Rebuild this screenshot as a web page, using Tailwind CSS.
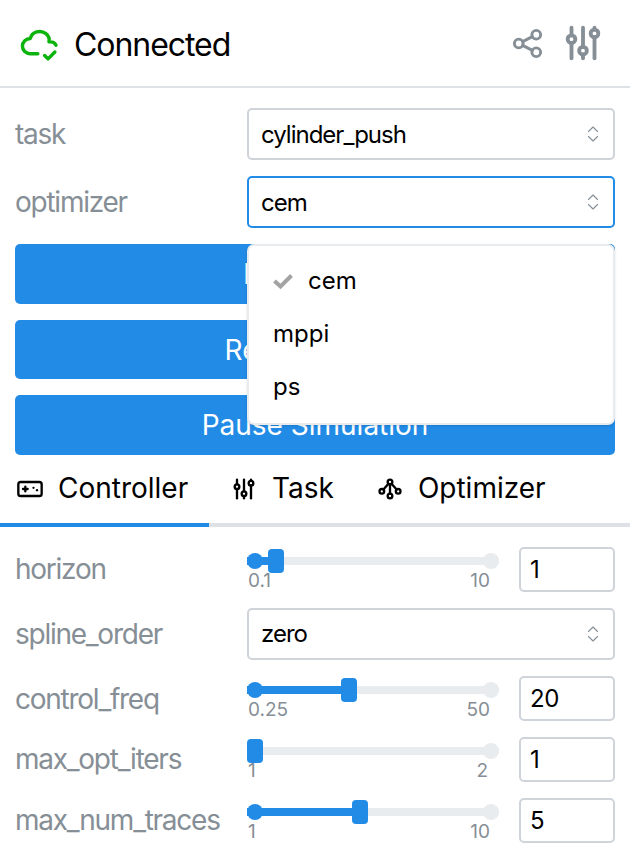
<!DOCTYPE html>
<html>
<head>
<meta charset="utf-8">
<script src="https://cdn.jsdelivr.net/npm/@tailwindcss/browser@4"></script>
</head>
<body class="bg-white font-[Inter,sans-serif] text-black overflow-hidden">
<div class="relative w-[630px] h-[850px] overflow-hidden">
  <header class="h-[88px] border-b-2 border-[#dee2e6] flex items-center pl-[19px] pr-[24px]">
    <svg class="w-[41px] h-[41px] text-[#0cb30c]" viewBox="0 0 24 24" fill="none" stroke="currentColor" stroke-width="2" stroke-linecap="round" stroke-linejoin="round"><path d="M11 18.004h-4.343c-2.572 -.004 -4.657 -2.011 -4.657 -4.487c0 -2.475 2.085 -4.482 4.657 -4.482c.393 -1.762 1.794 -3.2 3.675 -3.773c1.88 -.572 3.956 -.193 5.444 1c1.488 1.19 2.162 3.007 1.77 4.769h.99c1.388 0 2.585 .82 3.138 2.007"/><path d="M15 19l2 2l4 -4"/></svg>
    <span class="ml-[14px] mt-[3px] text-[32px] leading-none tracking-[-1.05px]">Connected</span>
    <div class="ml-auto flex items-center gap-[15px] text-[#868e96]">
      <svg class="w-[35px] h-[35px]" viewBox="0 0 24 24" fill="none" stroke="currentColor" stroke-width="2" stroke-linecap="round" stroke-linejoin="round"><path d="M3 12a3 3 0 1 0 6 0a3 3 0 0 0 -6 0"/><path d="M15 6a3 3 0 1 0 6 0a3 3 0 0 0 -6 0"/><path d="M15 18a3 3 0 1 0 6 0a3 3 0 0 0 -6 0"/><path d="M8.7 10.7l6.6 -3.4"/><path d="M8.7 13.3l6.6 3.4"/></svg>
      <svg class="w-[46px] h-[46px]" viewBox="0 0 24 24" fill="none" stroke="currentColor" stroke-width="2" stroke-linecap="round" stroke-linejoin="round"><path d="M4 10a2 2 0 1 0 4 0a2 2 0 0 0 -4 0"/><path d="M6 4v4"/><path d="M6 12v8"/><path d="M10 16a2 2 0 1 0 4 0a2 2 0 0 0 -4 0"/><path d="M12 4v10"/><path d="M12 18v2"/><path d="M16 7a2 2 0 1 0 4 0a2 2 0 0 0 -4 0"/><path d="M18 4v1"/><path d="M18 9v11"/></svg>
    </div>
  </header>

  <section class="px-[15px] pt-[20px] flex flex-col gap-[16px]">
    <div class="flex items-center h-[52px]">
      <span class="w-[232px] text-[28px] tracking-[-1.25px] text-[#868e96]">task</span>
      <div class="w-[368px] h-[52px] border-2 border-[#ced4da] rounded-[5px] flex items-center justify-between pl-[12px] pr-[14px] text-[24px] tracking-[-1px]">
        <span class="mt-[2px]">cylinder_push</span>
        <svg class="w-[12px] h-[18px] text-[#868e96]" viewBox="0 0 12 18" fill="none" stroke="currentColor" stroke-width="1.1" stroke-linecap="round" stroke-linejoin="round"><path d="M1.5 6.5L6 2L10.5 6.5"/><path d="M1.5 11.5L6 16L10.5 11.5"/></svg>
      </div>
    </div>
    <div class="flex items-center h-[52px]">
      <span class="w-[232px] text-[28px] tracking-[-1.25px] text-[#868e96]">optimizer</span>
      <div class="w-[368px] h-[52px] border-2 border-[#228be6] rounded-[5px] flex items-center justify-between pl-[12px] pr-[14px] text-[24px] tracking-[-1px]">
        <span class="mt-[2px]">cem</span>
        <svg class="w-[12px] h-[18px] text-[#868e96]" viewBox="0 0 12 18" fill="none" stroke="currentColor" stroke-width="1.1" stroke-linecap="round" stroke-linejoin="round"><path d="M1.5 6.5L6 2L10.5 6.5"/><path d="M1.5 11.5L6 16L10.5 11.5"/></svg>
      </div>
    </div>
    <div class="h-[60px] bg-[#228be6] rounded-[5px] flex items-center justify-center text-white text-[28px]">Reset Task</div>
    <div class="h-[59px] bg-[#228be6] rounded-[5px] flex items-center justify-center text-white text-[28px]">Reload Model</div>
    <div class="h-[60px] bg-[#228be6] rounded-[5px] flex items-center justify-center text-white text-[28px]">Pause Simulation</div>
  </section>

  <nav class="h-[72px] border-b-4 border-[#dee2e6] flex relative">
    <div class="w-[209px] h-[72px] border-b-4 border-[#228be6] flex items-center pl-[16px] gap-[14px] text-[28px] shrink-0">
      <svg class="w-[28px] h-[28px]" viewBox="0 0 24 24" fill="none" stroke="currentColor" stroke-width="2" stroke-linecap="round" stroke-linejoin="round"><path d="M2 6m0 2a2 2 0 0 1 2 -2h16a2 2 0 0 1 2 2v8a2 2 0 0 1 -2 2h-16a2 2 0 0 1 -2 -2z"/><path d="M6 12h4m-2 -2v4"/><path d="M15 11l0 .01"/><path d="M18 13l0 .01"/></svg>
      <span class="mb-[2px]">Controller</span>
    </div>
    <div class="h-[68px] flex items-center pl-[21px] gap-[14px] text-[28px]">
      <svg class="w-[28px] h-[28px]" viewBox="0 0 24 24" fill="none" stroke="currentColor" stroke-width="2" stroke-linecap="round" stroke-linejoin="round"><path d="M4 10a2 2 0 1 0 4 0a2 2 0 0 0 -4 0"/><path d="M6 4v4"/><path d="M6 12v8"/><path d="M10 16a2 2 0 1 0 4 0a2 2 0 0 0 -4 0"/><path d="M12 4v10"/><path d="M12 18v2"/><path d="M16 7a2 2 0 1 0 4 0a2 2 0 0 0 -4 0"/><path d="M18 4v1"/><path d="M18 9v11"/></svg>
      <span class="mb-[2px]">Task</span>
    </div>
    <div class="h-[68px] flex items-center pl-[42px] gap-[14px] text-[28px]">
      <svg class="w-[28px] h-[28px]" viewBox="0 0 24 24" fill="none" stroke="currentColor" stroke-width="2" stroke-linecap="round" stroke-linejoin="round"><path d="M14 6a2 2 0 1 0 -4 0a2 2 0 0 0 4 0z"/><path d="M7 14a2 2 0 1 0 -4 0a2 2 0 0 0 4 0z"/><path d="M21 14a2 2 0 1 0 -4 0a2 2 0 0 0 4 0z"/><path d="M14 18a2 2 0 1 0 -4 0a2 2 0 0 0 4 0z"/><path d="M12 8v8"/><path d="M6.316 12.496l4.368 -4.992"/><path d="M17.684 12.496l-4.366 -4.99"/></svg>
      <span class="mb-[2px]">Optimizer</span>
    </div>
  </nav>

  <section class="px-[15px] pt-[20px] flex flex-col gap-[16px]">
    <!-- horizon -->
    <div class="flex items-start h-[45px]">
      <span class="w-[232px] h-[43px] flex items-center text-[28px] tracking-[-1.25px] text-[#868e96]">horizon</span>
      <div class="w-[252px] mr-[20px]">
        <div class="relative h-[8px] mt-[10px] bg-[#e9ecef] rounded-full">
          <div class="absolute left-0 -top-[4px] w-[16px] h-[16px] rounded-full bg-[#228be6]"></div>
          <div class="absolute right-0 -top-[4px] w-[16px] h-[16px] rounded-full bg-[#e9ecef]"></div>
          <div class="absolute left-0 top-0 h-[8px] w-[25px] bg-[#228be6]"></div>
          <div class="absolute left-[21px] -top-[8px] w-[16px] h-[24px] rounded-[4px] bg-[#228be6]"></div>
        </div>
        <div class="mt-[6px] flex justify-between text-[19px] leading-[20px] text-[#868e96] pl-[1px] pr-[9px]"><span>0.1</span><span>10</span></div>
      </div>
      <div class="w-[96px] h-[45px] border-2 border-[#ced4da] rounded-[5px] flex items-center pl-[9px] text-[24px] tracking-[-0.5px]">1</div>
    </div>
    <!-- spline -->
    <div class="flex items-center h-[52px]">
      <span class="w-[232px] text-[28px] tracking-[-1.25px] text-[#868e96]">spline_order</span>
      <div class="w-[368px] h-[52px] border-2 border-[#ced4da] rounded-[5px] flex items-center justify-between pl-[12px] pr-[14px] text-[24px] tracking-[-1px]">
        <span>zero</span>
        <svg class="w-[12px] h-[18px] text-[#868e96]" viewBox="0 0 12 18" fill="none" stroke="currentColor" stroke-width="1.1" stroke-linecap="round" stroke-linejoin="round"><path d="M1.5 6.5L6 2L10.5 6.5"/><path d="M1.5 11.5L6 16L10.5 11.5"/></svg>
      </div>
    </div>
    <!-- control_freq -->
    <div class="flex items-start h-[45px]">
      <span class="w-[232px] h-[45px] flex items-center text-[28px] tracking-[-1.25px] text-[#868e96]">control_freq</span>
      <div class="w-[252px] mr-[20px]">
        <div class="relative h-[8px] mt-[10px] bg-[#e9ecef] rounded-full">
          <div class="absolute left-0 -top-[4px] w-[16px] h-[16px] rounded-full bg-[#228be6]"></div>
          <div class="absolute right-0 -top-[4px] w-[16px] h-[16px] rounded-full bg-[#e9ecef]"></div>
          <div class="absolute left-0 top-0 h-[8px] w-[100px] bg-[#228be6]"></div>
          <div class="absolute left-[94px] -top-[8px] w-[16px] h-[24px] rounded-[4px] bg-[#228be6]"></div>
        </div>
        <div class="mt-[6px] flex justify-between text-[19px] leading-[20px] text-[#868e96] pl-[1px] pr-[9px]"><span>0.25</span><span>50</span></div>
      </div>
      <div class="w-[96px] h-[45px] border-2 border-[#ced4da] rounded-[5px] flex items-center pl-[9px] text-[24px] tracking-[-0.5px]">20</div>
    </div>
    <!-- max_opt_iters -->
    <div class="flex items-start h-[45px]">
      <span class="w-[232px] h-[43px] flex items-center text-[28px] tracking-[-1.25px] text-[#868e96]">max_opt_iters</span>
      <div class="w-[252px] mr-[20px]">
        <div class="relative h-[8px] mt-[10px] bg-[#e9ecef] rounded-full">
          <div class="absolute right-0 -top-[4px] w-[16px] h-[16px] rounded-full bg-[#e9ecef]"></div>
          <div class="absolute left-0 -top-[8px] w-[16px] h-[24px] rounded-[4px] bg-[#228be6]"></div>
        </div>
        <div class="mt-[6px] flex justify-between text-[19px] leading-[20px] text-[#868e96] pl-[1px] pr-[11px]"><span>1</span><span>2</span></div>
      </div>
      <div class="w-[96px] h-[45px] border-2 border-[#ced4da] rounded-[5px] flex items-center pl-[9px] text-[24px] tracking-[-0.5px]">1</div>
    </div>
    <!-- max_num_traces -->
    <div class="flex items-start h-[45px]">
      <span class="w-[232px] h-[43px] flex items-center text-[28px] tracking-[-1.25px] text-[#868e96]">max_num_traces</span>
      <div class="w-[252px] mr-[20px]">
        <div class="relative h-[8px] mt-[10px] bg-[#e9ecef] rounded-full">
          <div class="absolute left-0 -top-[4px] w-[16px] h-[16px] rounded-full bg-[#228be6]"></div>
          <div class="absolute right-0 -top-[4px] w-[16px] h-[16px] rounded-full bg-[#e9ecef]"></div>
          <div class="absolute left-0 top-0 h-[8px] w-[112px] bg-[#228be6]"></div>
          <div class="absolute left-[105px] -top-[8px] w-[16px] h-[24px] rounded-[4px] bg-[#228be6]"></div>
        </div>
        <div class="mt-[6px] flex justify-between text-[19px] leading-[20px] text-[#868e96] pl-[1px] pr-[9px]"><span>1</span><span>10</span></div>
      </div>
      <div class="w-[96px] h-[45px] border-2 border-[#ced4da] rounded-[5px] flex items-center pl-[9px] text-[24px] tracking-[-0.5px]">5</div>
    </div>
  </section>

  <!-- dropdown menu -->
  <div class="absolute left-[247px] top-[244px] w-[368px] h-[181px] bg-white border-2 border-[#e9ecef] rounded-[7px] shadow-sm text-[24px] pt-[8px]">
    <div class="h-[54px] flex items-center pl-[24px]">
      <svg class="w-[20px] h-[20px] text-[#a3a3a3]" viewBox="0 0 20 20" fill="none" stroke="currentColor" stroke-width="4"><path d="M1.5 10l6 5.5L18.5 4.5"/></svg>
      <span class="ml-[15px]">cem</span>
    </div>
    <div class="h-[51px] flex items-center pl-[24px]">mppi</div>
    <div class="h-[56px] flex items-center pl-[24px]">ps</div>
  </div>
</div>
</body>
</html>
